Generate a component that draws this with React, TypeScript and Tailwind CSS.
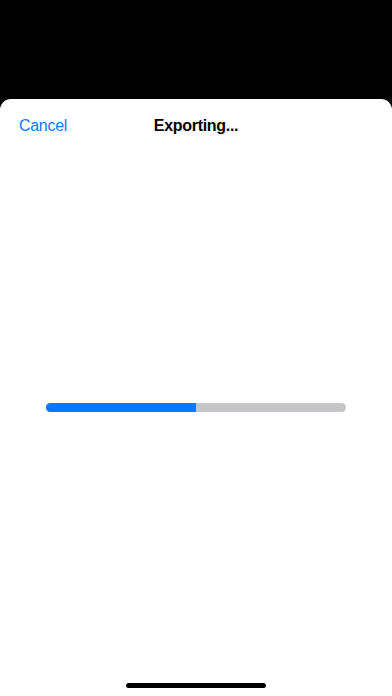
import React from 'react';

const App: React.FC = () => {
  const progress = 50;

  return (
    <div className="h-screen w-full bg-black flex flex-col font-['Liberation_Sans',Arial,sans-serif]">
      <div className="h-[99px] shrink-0" />
      <div className="flex-1 bg-white rounded-t-[11px] flex flex-col">
        {/* Header */}
        <div className="relative h-[54px] flex items-center justify-center shrink-0">
          <button className="absolute left-[19px] text-[16px] text-[#0a7aff] tracking-[-0.3px]">Cancel</button>
          <h1 className="text-[16px] font-bold text-black tracking-[-0.3px]">Exporting...</h1>
        </div>

        {/* Progress */}
        <div className="h-[250px] shrink-0" />
        <div className="mx-[46px] h-[9px] rounded-full bg-[#c6c6c8] overflow-hidden">
          <div className="h-full bg-[#007aff]" style={{ width: `${progress}%` }} />
        </div>

        <div className="flex-1" />
        {/* Home indicator */}
        <div className="flex justify-center pb-[8px]">
          <div className="w-[140px] h-[5px] rounded-full bg-black" />
        </div>
      </div>
    </div>
  );
};

export default App;
